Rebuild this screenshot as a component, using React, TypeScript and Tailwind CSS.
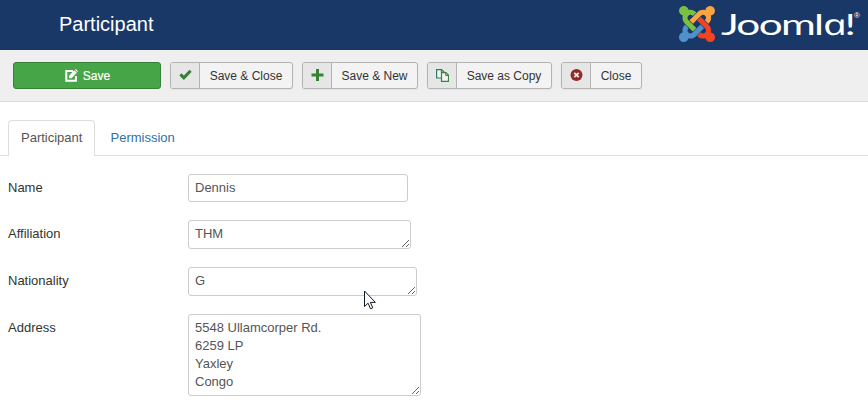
import type { ReactNode } from "react";

function JoomlaMark() {
  return (
    <svg className="block h-9 w-9 shrink-0" viewBox="0 32 448 448" aria-hidden="true">
      <path fill="#7ac143" d="M.6 92.1C.6 58.8 27.4 32 60.4 32c30 0 54.5 21.9 59.2 50.2 32.6-7.6 67.1.6 96.5 30l-44.3 44.3c-20.5-20.5-42.6-16.3-55.4-3.5-14.3 14.3-14.3 37.9 0 52.2l99.5 99.5-44 44.3c-87.7-87.2-49.7-49.7-99.8-99.7-26.8-26.5-35-64.8-24.8-98.9C20.4 144.6.6 120.7.6 92.1z" />
      <path fill="#f9a541" d="M130.1 208.5l44.3 44.3c10-10 89.7-89.7 99.7-99.8 14.3-14.3 37.6-14.3 51.9 0 12.8 12.8 17 35-3.5 55.4l44 44.3c31.2-31.2 38.5-67.6 28.9-101.2 29.2-4.1 51.9-29.2 51.9-59.5 0-33.2-26.8-60.1-59.8-60.1-30.3 0-55.4 22.5-59.5 51.6-33.8-9.9-71.7-1.5-98.3 25.1-18.3 19.1-71.1 71.5-99.6 99.9z" />
      <path fill="#f44321" d="M396.4 360.7c8.2-32.7-.9-68.5-26.3-93.9-11.8-12.2 5 4.7-99.5-99.7l-44.3 44.3 99.7 99.7c14.3 14.3 14.3 37.6 0 51.9-12.8 12.8-35 17-55.4-3.5l-44 44.3c27.6 30.2 68 38.8 102.7 28 5.5 27.4 29.7 48.1 58.9 48.1 33 0 59.8-26.8 59.8-60.1 0-30.2-22.5-55-51.6-59.1z" />
      <path fill="#5091cd" d="M312.1 307.6l-44-44.3c-87 86.4-50.4 50.4-99.7 99.8-14.3 14.3-37.6 14.3-51.9 0-13.1-13.4-16.9-35.3 3.2-55.4l-44-44.3c-30.2 30.2-38 65.2-29.5 98.3-26.7 6-46.2 29.9-46.2 58.2C0 453.2 26.8 480 59.8 480c28.6 0 52.5-19.8 58.6-46.7 32.7 8.2 68.5-.6 94.2-26 32.1-32 12.2-12.4 99.5-99.7z" />
    </svg>
  );
}

function EditIcon() {
  return (
    <svg className="h-[13px] w-[13px]" viewBox="0 0 13 13" fill="none" aria-hidden="true">
      <path d="M8 1.9H1.3v9.8h9.6V7" stroke="#fff" strokeWidth="2" />
      <path d="M4 9.3V6.7L9.4 1.2l2.5 2.5-5.4 5.6zM10 .7l.9-.7L13 2.2l-.7.9z" fill="#fff" />
    </svg>
  );
}

function CheckIcon() {
  return (
    <svg className="-mt-0.5 h-3 w-[13px]" viewBox="0 0 13 12" aria-hidden="true">
      <path d="M.3 6.500l2.100-2.200 2.500 2.200L10.500.8l2.200 2-7.800 8.200z" fill="#378137" />
    </svg>
  );
}

function PlusIcon() {
  return (
    <svg className="-mt-0.5 h-3 w-[13px]" viewBox="0 0 13 12" aria-hidden="true">
      <path d="M5 0h3v4.500h4.500v3H8V12H5V7.500H.5v-3H5z" fill="#378137" />
    </svg>
  );
}

function CopyIcon() {
  return (
    <svg className="-mt-px h-[13px] w-[13px]" viewBox="0 0 13 13" aria-hidden="true">
      <path d="M.6.6h4.900L8 3v6H.6z" fill="#f0f5f0" stroke="#2f7a62" strokeWidth="1.200" />
      <path d="M5.300.8v2.500H8" fill="none" stroke="#2f7a62" />
      <path d="M5.500 3.600h4.400l2.600 2.600v6.200h-7z" fill="#f0f5f0" stroke="#3d833d" strokeWidth="1.200" />
      <path d="M9.700 3.800v2.700h2.600" fill="none" stroke="#3d833d" />
    </svg>
  );
}

function CancelIcon() {
  return (
    <svg className="-mt-0.5 h-3 w-[13px]" viewBox="0 0 13 12" aria-hidden="true">
      <circle cx="6.500" cy="6" r="6" fill="#942a25" />
      <path d="M4.300 3.800l4.400 4.400M8.700 3.800L4.300 8.200" stroke="#eee" strokeWidth="1.800" />
    </svg>
  );
}

function ToolButton({ icon, label, width }: { icon: ReactNode; label: string; width: string }) {
  return (
    <button
      className={`flex h-[27px] overflow-hidden rounded-[3px] border border-[#b3b3b3] bg-[#f3f3f3] text-xs text-[#333] shadow-[0_1px_2px_rgba(0,0,0,0.05)] ${width}`}
    >
      <span className="flex h-full w-[29px] shrink-0 items-center justify-center border-r border-[#b3b3b3] bg-[#e6e6e6]">
        {icon}
      </span>
      <span className="flex h-full flex-1 items-center justify-center whitespace-nowrap">{label}</span>
    </button>
  );
}

function Field({ label, height, children }: { label: string; height: string; children: ReactNode }) {
  return (
    <div className={`flex items-start ${height}`}>
      <label className="w-[180px] shrink-0 pt-[5px] leading-[18px] text-[#333]">{label}</label>
      {children}
    </div>
  );
}

const control =
  "block rounded-[3px] border border-[#ccc] bg-white px-1.5 leading-[18px] text-[#555] outline-none";

export default function App() {
  return (
    <div className="relative h-[412px] w-[868px] overflow-hidden bg-white font-['Liberation_Sans',Arial,sans-serif] text-[13px]">
      <header className="flex h-[50px] items-start justify-between bg-[#1a3867] pl-[59px] text-white">
        <h1 className="pt-[9px] text-[20px] leading-[30px]">Participant</h1>
        <div className="flex w-[189px] pt-1.5">
          <JoomlaMark />
          <div className="ml-1.5 flex w-[147px] items-start">
            <div className="flex w-[133px] shrink-0 origin-top-left scale-x-[1.46] font-[Lato,sans-serif] text-[29px] leading-9 tracking-[-1.2px]">
              <span>Jooml</span>
              <span className="inline-block -skew-x-[-12deg] font-['Open_Sans',sans-serif] italic">a</span>
              <span>!</span>
            </div>
            <span className="mt-1.5 text-[8px] leading-none">®</span>
          </div>
        </div>
      </header>

      <div className="flex h-[52px] gap-[9px] border-b border-[#ddd] bg-[#efefef] pl-[13px] pt-3">
        <button className="flex h-[27px] w-[148px] items-center justify-center gap-[5px] rounded-[3px] border border-[#378137] bg-[#46a546] pl-px text-xs text-white [-webkit-text-stroke:0.2px_white]">
          <EditIcon />
          <span>Save</span>
        </button>
        <ToolButton icon={<CheckIcon />} label="Save & Close" width="w-[123px]" />
        <ToolButton icon={<PlusIcon />} label="Save & New" width="w-[116px]" />
        <ToolButton icon={<CopyIcon />} label="Save as Copy" width="w-[125px]" />
        <ToolButton icon={<CancelIcon />} label="Close" width="w-[81px]" />
      </div>

      <nav className="mt-[18px] flex h-9 border-b border-[#ddd] pl-2">
        <a className="h-9 w-[87px] rounded-t border border-b-0 border-[#ddd] bg-white pl-3 pt-2 leading-[18px] text-[#555]">
          Participant
        </a>
        <a className="pl-[15.5px] pt-[9px] leading-[18px] text-[#3071a9]">Permission</a>
      </nav>

      <form className="pl-2 pt-[18px]">
        <Field label="Name" height="h-[46px]">
          <input className={`${control} h-7 w-[220px] pb-0.5`} defaultValue="Dennis" />
        </Field>
        <Field label="Affiliation" height="h-[47px]">
          <textarea className={`${control} h-[29px] w-[223px] overflow-hidden py-1`} defaultValue="THM" />
        </Field>
        <Field label="Nationality" height="h-[47px]">
          <textarea className={`${control} h-[29px] w-[229px] overflow-hidden py-1`} defaultValue="G" />
        </Field>
        <Field label="Address" height="h-[82px]">
          <textarea
            className={`${control} h-[82px] w-[233px] overflow-hidden py-1`}
            defaultValue={"5548 Ullamcorper Rd.\n6259 LP\nYaxley\nCongo"}
          />
        </Field>
      </form>

      <svg className="absolute left-[364px] top-[290px] h-5 w-3" viewBox="0 0 12 20" aria-hidden="true">
        <path d="M.5 1v15.500l3.600-3.300 2.400 5.600 2.300-1-2.400-5.400h5z" fill="#fff" stroke="#111827" />
      </svg>
    </div>
  );
}
